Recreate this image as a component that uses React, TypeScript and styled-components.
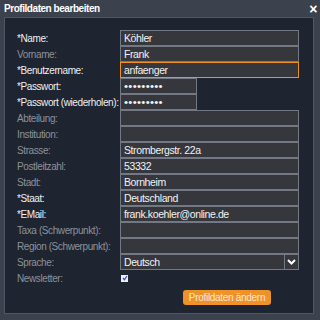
import { Fragment } from "react";
import styled, { createGlobalStyle } from "styled-components";

const GlobalStyle = createGlobalStyle`
  html, body {
    margin: 0;
    padding: 0;
    background: #3b414d;
  }
`;

const Dialog = styled.div`
  width: 320px;
  height: 320px;
  background: #3b414d;
  display: flex;
  flex-direction: column;
  font-family: "Liberation Sans", Arial, sans-serif;
  font-size: 10px;
  letter-spacing: -0.4px;
  box-sizing: border-box;
`;

const TitleBar = styled.div`
  height: 17px;
  display: flex;
  align-items: center;
  justify-content: space-between;
  padding: 0 3px 0 4px;
  color: #ffffff;
`;

const Title = styled.span`
  font-weight: bold;
  font-size: 10px;
  letter-spacing: -0.45px;
`;

const Close = styled.span`
  font-size: 14px;
  font-weight: bold;
  line-height: 1;
`;

const Panel = styled.div`
  margin: 0 6px 6px 4px;
  flex: 1;
  background: #1e2430;
  border: 1px solid #4f5664;
  padding: 12px 12px 0 12px;
  box-sizing: border-box;
`;

const Form = styled.div`
  display: grid;
  grid-template-columns: 103px 179px;
  grid-auto-rows: 16px;
`;

const Label = styled.div<{ $required?: boolean }>`
  display: flex;
  align-items: center;
  color: ${(p) => (p.$required ? "#eef0f2" : "#8d929b")};
  white-space: nowrap;
`;

const Field = styled.div<{ $narrow?: boolean; $focus?: boolean }>`
  width: ${(p) => (p.$narrow ? "77px" : "179px")};
  height: 16px;
  box-sizing: border-box;
  background: #35373d;
  border: 1px solid ${(p) => (p.$focus ? "#f0901e" : "#737885")};
  color: #f2f2f2;
  font-size: 10.5px;
  letter-spacing: -0.4px;
  display: flex;
  align-items: center;
  padding-left: 3px;
  overflow: hidden;
  white-space: nowrap;
`;

const Dots = styled.span`
  font-size: 11.5px;
  letter-spacing: 0.3px;
`;

const SelectBox = styled(Field)`
  padding-right: 0;
  justify-content: space-between;
`;

const Arrow = styled.span`
  width: 13px;
  height: 100%;
  border-left: 1px solid #737885;
  display: flex;
  align-items: center;
  justify-content: center;
`;

const CheckCell = styled.div`
  display: flex;
  align-items: center;
  padding-left: 1px;
`;

const Check = styled.span`
  width: 7px;
  height: 7px;
  background: #eef0f6;
  display: flex;
  align-items: center;
  justify-content: center;
`;

const Footer = styled.div`
  display: flex;
  margin: 4px 0 0 166px;
`;

const SaveButton = styled.button`
  width: 88px;
  height: 15px;
  border: none;
  border-radius: 3px;
  background: #f0922a;
  color: #fde8cf;
  font-family: "Liberation Sans", Arial, sans-serif;
  font-size: 10px;
  letter-spacing: -0.3px;
  white-space: nowrap;
  padding: 0;
  cursor: pointer;
`;

interface Row {
  label: string;
  value?: string;
  required?: boolean;
  kind?: "text" | "password" | "focus" | "select" | "check";
}

const rows: Row[] = [
  { label: "*Name:", value: "Köhler", required: true },
  { label: "Vorname:", value: "Frank" },
  { label: "*Benutzername:", value: "anfaenger", required: true, kind: "focus" },
  { label: "*Passwort:", required: true, kind: "password" },
  { label: "*Passwort (wiederholen):", required: true, kind: "password" },
  { label: "Abteilung:" },
  { label: "Institution:" },
  { label: "Strasse:", value: "Strombergstr. 22a" },
  { label: "Postleitzahl:", value: "53332" },
  { label: "Stadt:", value: "Bornheim" },
  { label: "*Staat:", value: "Deutschland", required: true },
  { label: "*EMail:", value: "frank.koehler@online.de", required: true },
  { label: "Taxa (Schwerpunkt):" },
  { label: "Region (Schwerpunkt):" },
  { label: "Sprache:", value: "Deutsch", kind: "select" },
  { label: "Newsletter:", kind: "check" },
];

function renderField(row: Row) {
  switch (row.kind) {
    case "password":
      return (
        <Field $narrow>
          <Dots>•••••••••</Dots>
        </Field>
      );
    case "focus":
      return <Field $focus>{row.value}</Field>;
    case "select":
      return (
        <SelectBox>
          {row.value}
          <Arrow>
            <svg width="9" height="6" viewBox="0 0 9 6">
              <path d="M1 1 L4.5 4.5 L8 1" stroke="#fff" strokeWidth="2" fill="none" />
            </svg>
          </Arrow>
        </SelectBox>
      );
    case "check":
      return (
        <CheckCell>
          <Check>
            <svg width="6" height="6" viewBox="0 0 6 6">
              <path d="M1 3 L2.5 4.8 L5 1" stroke="#3346c8" strokeWidth="1.2" fill="none" />
            </svg>
          </Check>
        </CheckCell>
      );
    default:
      return <Field>{row.value}</Field>;
  }
}

export default function App() {
  return (
    <>
      <GlobalStyle />
      <Dialog>
        <TitleBar>
          <Title>Profildaten bearbeiten</Title>
          <Close>×</Close>
        </TitleBar>
        <Panel>
          <Form>
            {rows.map((row) => (
              <Fragment key={row.label}>
                <Label $required={row.required}>{row.label}</Label>
                {renderField(row)}
              </Fragment>
            ))}
          </Form>
          <Footer>
            <SaveButton>Profildaten ändern</SaveButton>
          </Footer>
        </Panel>
      </Dialog>
    </>
  );
}
